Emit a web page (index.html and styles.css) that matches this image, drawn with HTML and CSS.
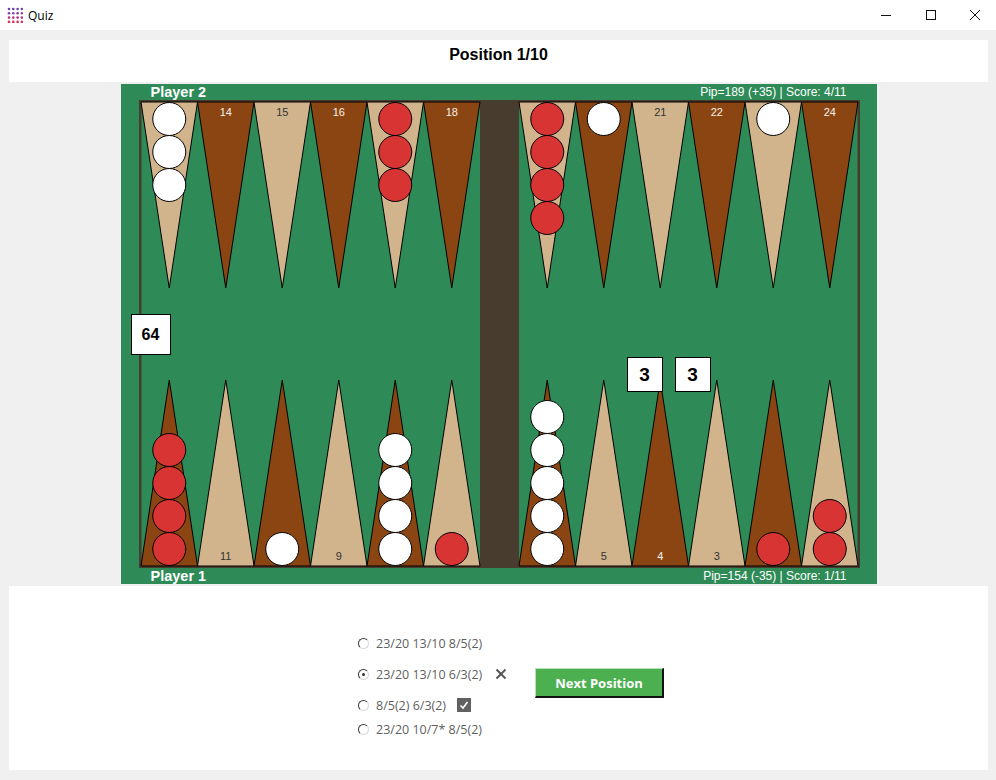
FILE: index.html
```html
<!DOCTYPE html>
<html>
<head>
<meta charset="utf-8">
<title>Quiz</title>
<link rel="stylesheet" href="styles.css">
</head>
<body>
<div class="titlebar">
  <svg class="app-icon" width="16" height="16" viewBox="0 0 16 16">
    <g class="r1"><circle cx="2" cy="2" r="1.3"/><circle cx="6.3" cy="2" r="1.3"/><circle cx="10.6" cy="2" r="1.3"/><circle cx="14.9" cy="2" r="1.3"/></g>
    <g class="r2"><circle cx="2" cy="6.3" r="1.3"/><circle cx="6.3" cy="6.3" r="1.3"/><circle cx="10.6" cy="6.3" r="1.3"/><circle cx="14.9" cy="6.3" r="1.3"/></g>
    <g class="r3"><circle cx="2" cy="10.6" r="1.3"/><circle cx="6.3" cy="10.6" r="1.3"/><circle cx="10.6" cy="10.6" r="1.3"/><circle cx="14.9" cy="10.6" r="1.3"/></g>
    <g class="r4"><circle cx="2" cy="14.9" r="1.3"/><circle cx="6.3" cy="14.9" r="1.3"/><circle cx="10.6" cy="14.9" r="1.3"/><circle cx="14.9" cy="14.9" r="1.3"/></g>
  </svg>
  <span class="app-title">Quiz</span>
  <div class="win-controls">
    <div class="win-btn"><svg width="12" height="12" viewBox="0 0 12 12"><line x1="1" y1="6.5" x2="11" y2="6.5"/></svg></div>
    <div class="win-btn"><svg width="12" height="12" viewBox="0 0 12 12"><rect x="1.5" y="1.5" width="9" height="9"/></svg></div>
    <div class="win-btn close"><svg width="12" height="12" viewBox="0 0 12 12"><line x1="1" y1="1" x2="11" y2="11"/><line x1="11" y1="1" x2="1" y2="11"/></svg></div>
  </div>
</div>

<div class="content">
  <div class="header">Position 1/10</div>

  <div class="board">
    <div class="board-row top">
      <span class="player">Player 2</span>
      <span class="pip">Pip=189 (+35) | Score: 4/11</span>
    </div>

    <svg class="field" width="721" height="468" viewBox="0 0 721 468">
      <rect class="frame" x="0" y="0" width="721" height="468"/>
      <rect class="felt" x="2.5" y="2" width="338.5" height="464"/>
      <rect class="felt" x="380" y="2" width="338.5" height="464"/>

      <!-- top points 13..24 -->
      <polygon class="tan" points="2,2 58.5,2 30.25,188"/>
      <polygon class="brn" points="58.5,2 115,2 86.75,188"/>
      <polygon class="tan" points="115,2 171.5,2 143.25,188"/>
      <polygon class="brn" points="171.5,2 228,2 199.75,188"/>
      <polygon class="tan" points="228,2 284.5,2 256.25,188"/>
      <polygon class="brn" points="284.5,2 341,2 312.75,188"/>
      <polygon class="tan" points="380,2 436.5,2 408.25,188"/>
      <polygon class="brn" points="436.5,2 493,2 464.75,188"/>
      <polygon class="tan" points="493,2 549.5,2 521.25,188"/>
      <polygon class="brn" points="549.5,2 606,2 577.75,188"/>
      <polygon class="tan" points="606,2 662.5,2 634.25,188"/>
      <polygon class="brn" points="662.5,2 719,2 690.75,188"/>

      <!-- bottom points 12..1 -->
      <polygon class="brn" points="2,466 58.5,466 30.25,280"/>
      <polygon class="tan" points="58.5,466 115,466 86.75,280"/>
      <polygon class="brn" points="115,466 171.5,466 143.25,280"/>
      <polygon class="tan" points="171.5,466 228,466 199.75,280"/>
      <polygon class="brn" points="228,466 284.5,466 256.25,280"/>
      <polygon class="tan" points="284.5,466 341,466 312.75,280"/>
      <polygon class="brn" points="380,466 436.5,466 408.25,280"/>
      <polygon class="tan" points="436.5,466 493,466 464.75,280"/>
      <polygon class="brn" points="493,466 549.5,466 521.25,280"/>
      <polygon class="tan" points="549.5,466 606,466 577.75,280"/>
      <polygon class="brn" points="606,466 662.5,466 634.25,280"/>
      <polygon class="tan" points="662.5,466 719,466 690.75,280"/>

      <!-- point labels -->
      <text class="lbl light" x="86.75" y="16">14</text>
      <text class="lbl dark" x="143.25" y="16">15</text>
      <text class="lbl light" x="199.75" y="16">16</text>
      <text class="lbl light" x="312.75" y="16">18</text>
      <text class="lbl dark" x="521.25" y="16">21</text>
      <text class="lbl light" x="577.75" y="16">22</text>
      <text class="lbl light" x="690.75" y="16">24</text>
      <text class="lbl dark" x="86.75" y="460">11</text>
      <text class="lbl dark" x="199.75" y="460">9</text>
      <text class="lbl dark" x="464.75" y="460">5</text>
      <text class="lbl light" x="521.25" y="460">4</text>
      <text class="lbl dark" x="577.75" y="460">3</text>

      <!-- checkers top -->
      <circle class="w" cx="30.25" cy="19" r="16.5"/>
      <circle class="w" cx="30.25" cy="52" r="16.5"/>
      <circle class="w" cx="30.25" cy="85" r="16.5"/>
      <circle class="rd" cx="256.25" cy="19" r="16.5"/>
      <circle class="rd" cx="256.25" cy="52" r="16.5"/>
      <circle class="rd" cx="256.25" cy="85" r="16.5"/>
      <circle class="rd" cx="408.25" cy="19" r="16.5"/>
      <circle class="rd" cx="408.25" cy="52" r="16.5"/>
      <circle class="rd" cx="408.25" cy="85" r="16.5"/>
      <circle class="rd" cx="408.25" cy="118" r="16.5"/>
      <circle class="w" cx="464.75" cy="19" r="16.5"/>
      <circle class="w" cx="634.25" cy="19" r="16.5"/>

      <!-- checkers bottom -->
      <circle class="rd" cx="30.25" cy="449" r="16.5"/>
      <circle class="rd" cx="30.25" cy="416" r="16.5"/>
      <circle class="rd" cx="30.25" cy="383" r="16.5"/>
      <circle class="rd" cx="30.25" cy="350" r="16.5"/>
      <circle class="w" cx="143.25" cy="449" r="16.5"/>
      <circle class="w" cx="256.25" cy="449" r="16.5"/>
      <circle class="w" cx="256.25" cy="416" r="16.5"/>
      <circle class="w" cx="256.25" cy="383" r="16.5"/>
      <circle class="w" cx="256.25" cy="350" r="16.5"/>
      <circle class="rd" cx="312.75" cy="449" r="16.5"/>
      <circle class="w" cx="408.25" cy="449" r="16.5"/>
      <circle class="w" cx="408.25" cy="416" r="16.5"/>
      <circle class="w" cx="408.25" cy="383" r="16.5"/>
      <circle class="w" cx="408.25" cy="350" r="16.5"/>
      <circle class="w" cx="408.25" cy="317" r="16.5"/>
      <circle class="rd" cx="634.25" cy="449" r="16.5"/>
      <circle class="rd" cx="690.75" cy="449" r="16.5"/>
      <circle class="rd" cx="690.75" cy="416" r="16.5"/>
    </svg>

    <div class="board-row bottom">
      <span class="player">Player 1</span>
      <span class="pip">Pip=154 (-35) | Score: 1/11</span>
    </div>

    <div class="cube">64</div>
    <div class="die die1">3</div>
    <div class="die die2">3</div>
  </div>

  <div class="answer">
    <div class="options">
      <div class="opt">
        <span class="radio"></span>
        <span class="opt-text">23/20 13/10 8/5(2)</span>
      </div>
      <div class="opt">
        <span class="radio checked"></span>
        <span class="opt-text">23/20 13/10 6/3(2)</span>
        <svg class="mark-x" width="12" height="12" viewBox="0 0 12 12"><line x1="1.5" y1="1.5" x2="10.5" y2="10.5"/><line x1="10.5" y1="1.5" x2="1.5" y2="10.5"/></svg>
      </div>
      <div class="opt">
        <span class="radio"></span>
        <span class="opt-text">8/5(2) 6/3(2)</span>
        <span class="checkbox"><svg width="14" height="14" viewBox="0 0 14 14"><polyline points="3.5,7.5 6,10 10.5,4"/></svg></span>
      </div>
      <div class="opt last">
        <span class="radio"></span>
        <span class="opt-text">23/20 10/7* 8/5(2)</span>
      </div>
    </div>
    <div class="next-btn">Next Position</div>
  </div>
</div>
</body>
</html>
```

FILE: styles.css
```css
* { box-sizing: border-box; }

html, body {
  margin: 0;
  padding: 0;
}

body {
  width: 996px;
  height: 780px;
  background: #f0f0f0;
  font-family: "Open Sans", "Liberation Sans", sans-serif;
  overflow: hidden;
}

/* ---------- title bar ---------- */
.titlebar {
  height: 30px;
  background: #ffffff;
  display: flex;
  align-items: center;
  padding-left: 7px;
}

.app-icon { display: block; }
.app-icon .r1 { fill: #6b3fb5; }
.app-icon .r2 { fill: #8a3aa8; }
.app-icon .r3 { fill: #b4358a; }
.app-icon .r4 { fill: #d8325f; }

.app-title {
  margin-left: 5px;
  font-size: 12px;
  color: #000;
}

.win-controls {
  margin-left: auto;
  display: flex;
  height: 30px;
}

.win-btn {
  width: 45px;
  height: 30px;
  display: flex;
  align-items: center;
  justify-content: center;
}
.win-btn.close { width: 43px; }
.win-btn svg { display: block; }
.win-btn line, .win-btn rect {
  stroke: #111;
  stroke-width: 1;
  fill: none;
}

/* ---------- content ---------- */
.content {
  padding: 10px 8px 0 9px;
  display: flex;
  flex-direction: column;
}

.header {
  height: 42px;
  background: #ffffff;
  text-align: center;
  padding-top: 6px;
  font-family: "Liberation Sans", Arial, sans-serif;
  font-weight: bold;
  font-size: 16px;
  line-height: 18px;
  color: #000;
}

/* ---------- board ---------- */
.board {
  position: relative;
  margin-top: 2px;
  align-self: center;
  width: 756px;
  height: 500px;
  background: #2e8b57;
  display: flex;
  flex-direction: column;
  font-family: "Liberation Sans", Arial, sans-serif;
  color: #ffffff;
}

.board-row {
  height: 16px;
  display: flex;
  justify-content: space-between;
  align-items: center;
  padding: 0 30px;
}

.player {
  font-weight: bold;
  font-size: 14.5px;
  line-height: 16px;
}

.pip {
  font-size: 12px;
  line-height: 16px;
}

.field {
  display: block;
  margin-left: 18px;
}

.frame { fill: #483c2e; }
.felt { fill: #2e8b57; }
.tan { fill: #d2b48c; stroke: #000; stroke-width: 1; }
.brn { fill: #8b4513; stroke: #000; stroke-width: 1; }
.w { fill: #ffffff; stroke: #000; stroke-width: 1; }
.rd { fill: #d93434; stroke: #000; stroke-width: 1; }

.lbl {
  font-family: "Liberation Sans", Arial, sans-serif;
  font-size: 11px;
  text-anchor: middle;
}
.lbl.light { fill: #f7f2ea; }
.lbl.dark { fill: #333333; }

.cube, .die {
  position: absolute;
  background: #ffffff;
  border: 1px solid #000;
  color: #000;
  font-weight: bold;
  display: flex;
  align-items: center;
  justify-content: center;
}

.cube {
  left: 10px;
  top: 230px;
  width: 40px;
  height: 41px;
  font-size: 16px;
}

.die {
  top: 273px;
  width: 36px;
  height: 35px;
  font-size: 19px;
}
.die1 { left: 506px; }
.die2 { left: 554px; }

/* ---------- answer area ---------- */
.answer {
  margin-top: 2px;
  height: 184px;
  background: #ffffff;
  display: flex;
  align-items: flex-start;
  padding: 47px 0 0 349px;
}

.options {
  width: 177px;
  display: flex;
  flex-direction: column;
}

.opt {
  height: 20px;
  display: flex;
  align-items: center;
}
.opt + .opt { margin-top: 11px; }
.opt.last { margin-top: 4px; }

.radio {
  width: 11px;
  height: 11px;
  border-radius: 50%;
  border: 1px solid;
  border-color: #3a3a3a #d8d8d8 #d8d8d8 #3a3a3a;
  background: #fff;
  position: relative;
  flex: none;
}
.radio.checked::after {
  content: "";
  position: absolute;
  left: 3px;
  top: 3px;
  width: 3px;
  height: 3px;
  border-radius: 50%;
  background: #333;
}

.opt-text {
  margin-left: 7px;
  font-size: 12.5px;
  color: #5f5f5f;
  white-space: nowrap;
}

.mark-x {
  margin-left: 13px;
  display: block;
}
.mark-x line {
  stroke: #555;
  stroke-width: 2;
}

.checkbox {
  margin-left: 11px;
  width: 14px;
  height: 14px;
  background: #616161;
  display: block;
}
.checkbox svg { display: block; }
.checkbox polyline {
  fill: none;
  stroke: #fff;
  stroke-width: 1.6;
}

.next-btn {
  margin-top: 35px;
  width: 129px;
  height: 30px;
  background: #4caf50;
  border-top: 1px solid #b9e0bb;
  border-left: 1px solid #b9e0bb;
  border-right: 2px solid #111;
  border-bottom: 2px solid #111;
  color: #ffffff;
  font-weight: bold;
  font-size: 13px;
  display: flex;
  align-items: center;
  justify-content: center;
}
```
